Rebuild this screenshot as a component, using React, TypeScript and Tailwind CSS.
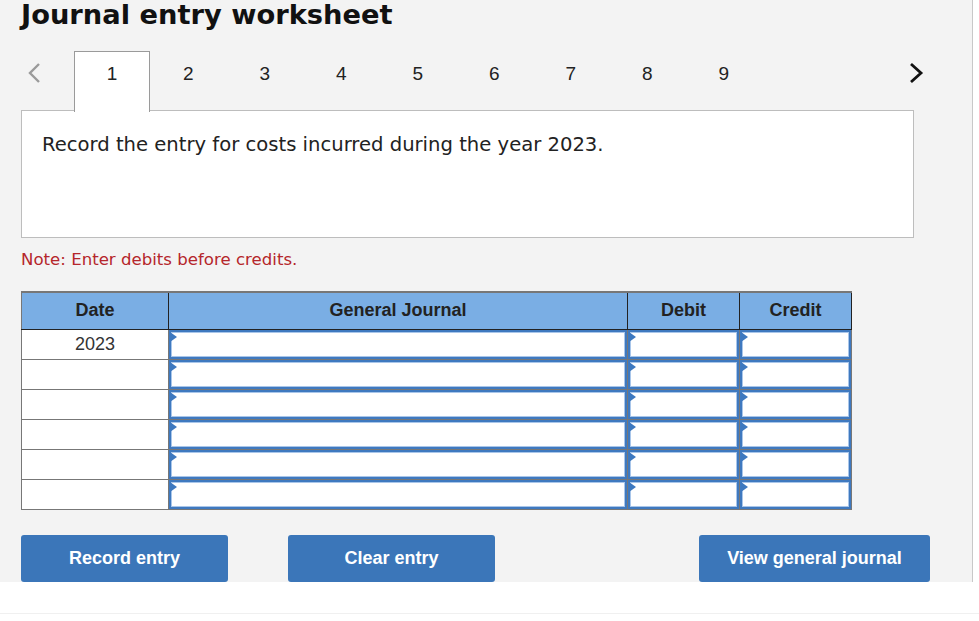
import React from "react";

const rows = ["2023", "", "", "", "", ""];

function Tri() {
  return (
    <svg className="absolute left-[-1px] top-[0px]" width="7" height="10" viewBox="0 0 7 10">
      <polygon points="0,0 7,5 0,10" fill="#3d78bf" />
    </svg>
  );
}

function InputCell() {
  return (
    <td className="border border-[#777] p-0 h-[30px]">
      <div className="relative h-[29px] border-2 border-[#3f79bf] bg-white shadow-[inset_0_0_0_1px_#a9c6ea]">
        <Tri />
      </div>
    </td>
  );
}

export default function App() {
  return (
    <div className="w-[979px] h-[621px] bg-white" style={{ fontFamily: '"DejaVu Sans", Verdana, sans-serif' }}>
      <div className="w-[973px] h-[582px] bg-[#f3f3f3] border-r border-[#c8c8c8] px-[21px] pt-px">
        <h1 className="text-[27.3px] leading-[31px] font-bold text-[#111] -mt-[2px]">Journal entry worksheet</h1>
        {/* tabs */}
        <div className="mt-[21px] flex h-[60px] items-start" style={{ fontFamily: '"Liberation Sans", Arial, sans-serif' }}>
          <div className="w-[53px] h-[44px] flex items-center pl-[6px]">
            <svg width="14" height="22" viewBox="0 0 14 22">
              <polyline points="12,2 3,11 12,20" fill="none" stroke="#9a9a9a" strokeWidth="2.4" />
            </svg>
          </div>
          {[1, 2, 3, 4, 5, 6, 7, 8, 9].map((n) => (
            <div
              key={n}
              className={
                "w-[76.5px] text-center text-[19px] leading-[44px] text-[#222] " +
                (n === 1 ? "h-[61px] bg-white border border-b-0 border-[#9a9a9a] relative z-10 w-[76px]" : "h-[60px] pt-px")
              }
            >
              {n}
            </div>
          ))}
          <div className="flex-1 h-[44px] flex items-center justify-end pr-[27px]">
            <svg width="15" height="22" viewBox="0 0 15 22">
              <polyline points="2,2 12,11 2,20" fill="none" stroke="#111" strokeWidth="2.8" />
            </svg>
          </div>
        </div>
        <div className="w-[893px] h-[128px] bg-white border border-[#bdbdbd] -mt-px pl-[20px] pt-[22px] text-[19.6px] leading-[24px] text-[#222]">
          Record the entry for costs incurred during the year 2023.
        </div>
        <p className="mt-[12px] text-[16.6px] leading-[20px] text-[#b5262b]">Note: Enter debits before credits.</p>
        <table
          className="mt-[21px] border-collapse w-[830px] table-fixed"
          style={{ fontFamily: '"Liberation Sans", Arial, sans-serif' }}
        >
          <colgroup>
            <col className="w-[147px]" />
            <col className="w-[459px]" />
            <col className="w-[112px]" />
            <col className="w-[112px]" />
          </colgroup>
          <thead>
            <tr className="h-[37px] bg-[#7aaee4] text-[18px] font-bold text-[#222]">
              <th className="border border-[#222] border-t-2 border-t-[#777] border-l-[#777] font-bold">Date</th>
              <th className="border border-[#222] border-t-2 border-t-[#777] font-bold">General Journal</th>
              <th className="border border-[#222] border-t-2 border-t-[#777] font-bold">Debit</th>
              <th className="border border-[#222] border-t-2 border-t-[#777] font-bold">Credit</th>
            </tr>
          </thead>
          <tbody>
            {rows.map((d, i) => (
              <tr key={i} className="h-[30px]">
                <td className="border border-[#777] bg-white text-center text-[18px] text-[#333] leading-[28px] align-top">{d}</td>
                <InputCell />
                <InputCell />
                <InputCell />
              </tr>
            ))}
          </tbody>
        </table>
        <div className="mt-[25px] flex text-white font-bold text-[18px]" style={{ fontFamily: '"Liberation Sans", Arial, sans-serif' }}>
          <button className="w-[207px] h-[47px] rounded-[3px] bg-[#3b76b9]">Record entry</button>
          <button className="ml-[60px] w-[207px] h-[47px] rounded-[3px] bg-[#3b76b9]">Clear entry</button>
          <button className="ml-[204px] w-[231px] h-[47px] rounded-[3px] bg-[#3b76b9]">View general journal</button>
        </div>
      </div>
      <div className="h-[31px]" />
      <div className="h-px bg-[#f0f0f0]" />
    </div>
  );
}
